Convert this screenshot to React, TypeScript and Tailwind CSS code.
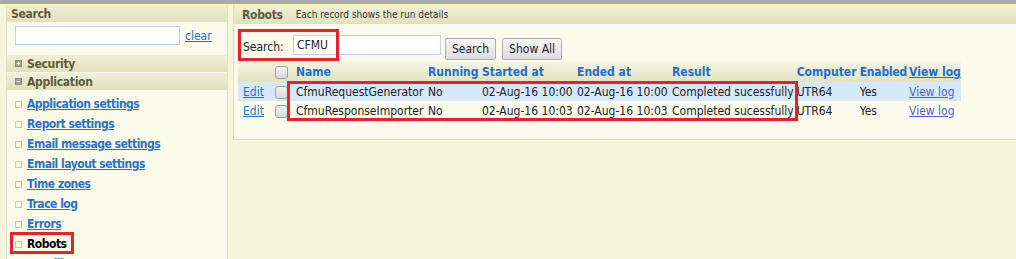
import React from "react";

const font = "font-['DejaVu_Sans_Condensed','DejaVu_Sans',sans-serif]";

const navItems = [
  "Application settings",
  "Report settings",
  "Email message settings",
  "Email layout settings",
  "Time zones",
  "Trace log",
  "Errors",
];

const rows = [
  { name: "CfmuRequestGenerator", start: "02-Aug-16 10:00", end: "02-Aug-16 10:00", selected: true },
  { name: "CfmuResponseImporter", start: "02-Aug-16 10:03", end: "02-Aug-16 10:03", selected: false },
];

function Box({ sign }: { sign: "+" | "-" }) {
  return (
    <span className="relative inline-block w-[7px] h-[7px] bg-[#a4a494] border border-[#8c8c7c] mr-[5px]">
      <span className="absolute left-[1px] top-[2px] w-[3px] h-[1px] bg-white" />
      {sign === "+" && <span className="absolute left-[2px] top-[1px] w-[1px] h-[3px] bg-white" />}
    </span>
  );
}

function Check() {
  return (
    <span className="inline-block w-[13px] h-[13px] rounded-[3px] border border-[#a0a0a0] bg-gradient-to-b from-[#f4f4f4] to-[#d8d8d8] align-middle" />
  );
}

function Section({ title, sign }: { title: string; sign: "+" | "-" }) {
  return (
    <div className="h-[17px] mb-[1px] flex items-center pl-[8px] bg-gradient-to-b from-[#f0f0d8] to-[#e0e0bc] text-[12px] tracking-[-0.3px] font-bold text-[#5c5c3c]">
      <Box sign={sign} />
      {title}
    </div>
  );
}

function NavItem({ label, active }: { label: string; active?: boolean }) {
  return (
    <div className="h-[20px] flex items-center pl-[8px] whitespace-nowrap">
      <span className="w-[7px] h-[7px] border border-[#cccc99] bg-[#fbfbe0] mr-[5px]" />
      <span
        className={`text-[12px] tracking-[-0.5px] font-bold ${
          active ? "text-black" : "text-[#2a72c6] underline"
        }`}
      >
        {label}
      </span>
    </div>
  );
}

export default function App() {
  return (
    <div className={`relative w-[1016px] h-[259px] overflow-hidden bg-[#f5f5dc] ${font}`}>
      <div className="h-[4px] bg-[#a9a9a9]" />
      <div className="h-[1px] bg-[#f8f4b0]" />
      <div className="flex">
        {/* Sidebar */}
        <div className="ml-[6px] w-[222px] h-[260px] bg-[#fafaeb] border-l border-r border-[#e2e2c4]">
          <div className="h-[17px] flex items-center pl-[4px] bg-gradient-to-b from-[#f0f0d8] to-[#e0e0bc] text-[12px] tracking-[-0.3px] font-bold text-[#5c5c3c]">
            Search
          </div>
          <div className="flex items-center pl-[8px] pt-[4px] pb-[10px]">
            <div className="w-[165px] h-[19px] bg-white border border-[#bcd3ee]" />
            <span className="ml-[5px] text-[12px] text-[#1f6fc5] underline">clear</span>
          </div>
          <Section title="Security" sign="+" />
          <Section title="Application" sign="-" />
          <div className="pt-[3px]">
            {navItems.map((item) => (
              <NavItem key={item} label={item} />
            ))}
            <NavItem label="Robots" active />
            <NavItem label="Handling" />
          </div>
        </div>

        {/* Main panel */}
        <div className="ml-[5px] flex-1 h-[135px] bg-[#fbfbeb] border-l border-b border-[#dedebc]">
          <div className="h-[19px] flex items-center pl-[8px] bg-gradient-to-b from-[#f0f0d8] to-[#e0e0bc] whitespace-nowrap">
            <span className="text-[12px] tracking-[-0.3px] font-bold text-[#5c5c3c]">Robots</span>
            <span className="ml-[13px] text-[10px] text-[#333]">Each record shows the run details</span>
          </div>
          <div className="flex items-start pl-[9px] pt-[11px] h-[38px] whitespace-nowrap">
            <span className="mt-[3px] w-[50px] text-[12px] text-[#222]">Search:</span>
            <div className="w-[148px] h-[20px] bg-white border border-[#bcd3ee] pl-[3px] text-[12px] leading-[18px] text-[#222]">
              CFMU
            </div>
            <button className="ml-[4px] mt-[3px] h-[22px] px-[6px] text-[12px] text-[#222] bg-gradient-to-b from-[#f6f6f6] to-[#dddddd] border border-[#acacac] rounded-[2px]">
              Search
            </button>
            <button className="ml-[6px] mt-[3px] h-[22px] px-[6px] text-[12px] text-[#222] bg-gradient-to-b from-[#f6f6f6] to-[#dddddd] border border-[#acacac] rounded-[2px]">
              Show All
            </button>
          </div>
          <table className="ml-[4px] border-collapse text-[12px] text-[#222] whitespace-nowrap">
            <thead>
              <tr className="h-[20px] bg-gradient-to-b from-[#f4f4e0] to-[#e2e2c0] text-[#1e6fc5] font-bold text-left">
                <th className="w-[34px]" />
                <th className="w-[21px] pl-[3px]"><Check /></th>
                <th className="w-[132px] pl-[3px]">Name</th>
                <th className="w-[54px] pl-[3px]">Running</th>
                <th className="w-[95px] pl-[3px]">Started at</th>
                <th className="w-[95px] pl-[3px]">Ended at</th>
                <th className="w-[124px] pl-[3px]">Result</th>
                <th className="w-[63px] pl-[3px]">Computer</th>
                <th className="w-[50px] pl-[3px] tracking-[-0.2px]">Enabled</th>
                <th className="w-[52px] pl-[2px] underline">View log</th>
              </tr>
            </thead>
            <tbody>
              {rows.map((r) => (
                <tr key={r.name} className={`h-[19px] ${r.selected ? "bg-[#d4e8f8]" : ""}`}>
                  <td className="pl-[5px] text-[#2a72c6] underline">Edit</td>
                  <td className="pl-[3px]"><Check /></td>
                  <td className="pl-[3px]">{r.name}</td>
                  <td className="pl-[3px]">No</td>
                  <td className="pl-[3px]">{r.start}</td>
                  <td className="pl-[3px]">{r.end}</td>
                  <td className="pl-[3px]">Completed sucessfully</td>
                  <td className="pl-[3px]">UTR64</td>
                  <td className="pl-[3px]">Yes</td>
                  <td className="pl-[2px] text-[#5b5bd6] underline">View log</td>
                </tr>
              ))}
            </tbody>
          </table>
        </div>
      </div>

      {/* Annotation boxes */}
      <div className="absolute left-[10px] top-[232px] w-[64px] h-[22px] border-[3px] border-[#e8202a]" />
      <div className="absolute left-[238px] top-[29px] w-[101px] h-[32px] border-[3px] border-[#e8202a]" />
      <div className="absolute left-[287px] top-[81px] w-[511px] h-[40px] border-[3px] border-[#e8202a]" />
    </div>
  );
}
